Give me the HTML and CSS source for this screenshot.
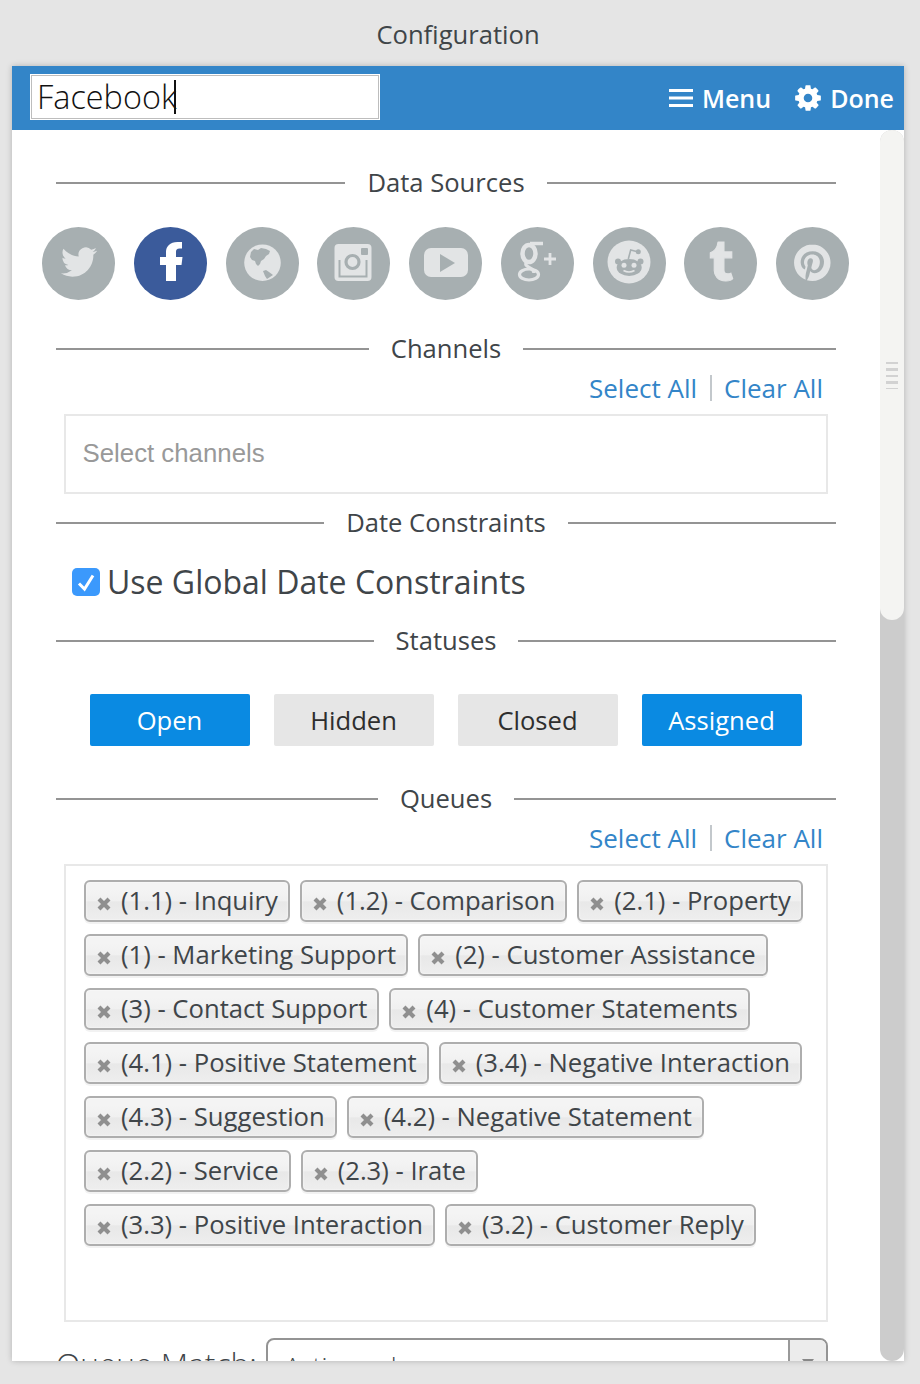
FILE: index.html
```html
<!DOCTYPE html>
<html lang="en">
<head>
<meta charset="utf-8">
<title>Configuration</title>
<link rel="stylesheet" href="styles.css">
</head>
<body>
<div class="title">Configuration</div>
<main class="window">
  <header class="topbar">
    <div class="name-input">Facebook<span class="caret"></span></div>
    <div class="actions">
      <span class="action">
        <svg class="menu-icon" viewBox="0 0 24 18"><path d="M0 1.500h24M0 9h24M0 16.500h24"/></svg>Menu
      </span>
      <span class="action">
        <svg class="gear-icon" viewBox="0 0 1792 1792"><path d="M1152 896q0-106-75-181t-181-75-181 75-75 181 75 181 181 75 181-75 75-181zm512-109v222q0 12-8 23t-20 13l-185 28q-19 54-39 91 35 50 107 138 10 12 10 25t-9 23q-27 37-99 108t-94 71q-12 0-26-9l-138-108q-44 23-91 38-16 136-29 186-7 28-36 28h-222q-14 0-24.500-8.500t-11.500-21.500l-28-184q-49-16-90-37l-141 107q-10 9-25 9-14 0-25-11-126-114-165-168-7-10-7-23 0-12 8-23 15-21 51-66.500t54-70.500q-27-50-41-99l-183-27q-13-2-21-12.500t-8-23.500v-222q0-12 8-23t19-13l186-28q14-46 39-92-40-57-107-138-10-12-10-24 0-10 9-23 26-36 98.500-107.500t94.500-71.500q13 0 26 10l138 107q44-23 91-38 16-136 29-186 7-28 36-28h222q14 0 24.500 8.500t11.500 21.500l28 184q49 16 90 37l142-107q9-9 24-9 13 0 25 10 129 119 165 170 7 8 7 22 0 12-8 23-15 21-51 66.500t-54 70.500q26 50 41 98l183 28q13 2 21 12.500t8 23.500z"/></svg>Done
      </span>
    </div>
  </header>
  <div class="body">
    <div class="content">
      <div class="divider first">Data Sources</div>
      <div class="sources">
        <svg class="source" viewBox="0 0 73 73"><circle class="disc" cx="36.500" cy="36.500" r="36.500"/><path class="glyph" transform="translate(19 17) scale(1.500)" d="M23.953 4.570a10 10 0 01-2.825.775 4.958 4.958 0 002.163-2.723c-.951.555-2.005.959-3.127 1.184a4.920 4.920 0 00-8.384 4.482C7.690 8.095 4.067 6.130 1.640 3.162a4.822 4.822 0 00-.666 2.475c0 1.710.870 3.213 2.188 4.096a4.904 4.904 0 01-2.228-.616v.060a4.923 4.923 0 003.946 4.827 4.996 4.996 0 01-2.212.085 4.936 4.936 0 004.604 3.417 9.867 9.867 0 01-6.102 2.105c-.390 0-.779-.023-1.170-.067a13.995 13.995 0 007.557 2.209c9.053 0 13.998-7.496 13.998-13.985 0-.210 0-.420-.015-.630A9.935 9.935 0 0024 4.590z"/></svg>
        <svg class="source" viewBox="0 0 73 73"><circle class="disc-fb" cx="36.500" cy="36.500" r="36.500"/><path class="glyph-white" d="M42 54V38h5.500l1-8H42v-5c0-2.300.7-3.500 3.700-3.500H48V15h-4.500C36 15 32 19.500 32 25v5h-6v8h6v16z"/></svg>
        <svg class="source" viewBox="0 0 73 73"><circle class="disc" cx="36.500" cy="36.500" r="36.500"/><circle class="glyph" cx="36.500" cy="35.700" r="18.300"/><path class="cut" d="M25 25l3-3 4 1 3-2 5 1 4 2-1 3-3 2-2 3-3 2-1 3-2 2-2-2-1-3-3-1-2-3z"/><path class="cut" d="M37 44l3-1 3 2 4 3-3 2-3 2-2-3z"/></svg>
        <svg class="source" viewBox="0 0 73 73"><circle class="disc" cx="36.500" cy="36.500" r="36.500"/><rect class="glyph" x="17.500" y="17" width="37" height="37" rx="4"/><path class="line-cut u" d="M22.500 33v16.500h27V33"/><circle class="ring" cx="35.500" cy="35" r="6.500"/><rect class="cut" x="44" y="21" width="7" height="7" rx="1"/></svg>
        <svg class="source" viewBox="0 0 73 73"><circle class="disc" cx="36.500" cy="36.500" r="36.500"/><rect class="glyph" x="15" y="21" width="44" height="29" rx="7"/><path class="cut" d="M31 27l15 9-15 9z"/></svg>
        <svg class="source" viewBox="0 0 73 73"><circle class="disc" cx="36.500" cy="36.500" r="36.500"/><g class="line"><ellipse cx="28" cy="26.500" rx="6.500" ry="8.500" stroke-width="4.500"/><ellipse cx="28" cy="47.500" rx="9.500" ry="5.500" stroke-width="3.200"/><path d="M29 16.500h13" stroke-width="3.500"/><path d="M26 35c-3 3 0 4 3 6 2 1 4 3 4 5" stroke-width="3.200"/><path d="M43 32h12M49 26v12" stroke-width="2.800"/></g></svg>
        <svg class="source" viewBox="0 0 73 73"><circle class="disc" cx="36.500" cy="36.500" r="36.500"/><circle class="glyph" cx="36" cy="35" r="21.500"/><circle class="cut" cx="25" cy="34.500" r="3"/><circle class="cut" cx="47.500" cy="34.500" r="3"/><ellipse class="cut" cx="36.200" cy="40.500" rx="12.500" ry="8.500"/><path class="line-cut" d="M35.300 32l2.400-9 6.800 1.700"/><circle class="cut" cx="45.300" cy="24.700" r="2.500"/><circle class="glyph" cx="31" cy="38.300" r="2.500"/><circle class="glyph" cx="41" cy="38.300" r="2.500"/><path class="line" d="M30.500 43.500q5.500 3 11 0" stroke-width="1.600"/></svg>
        <svg class="source" viewBox="0 0 73 73"><circle class="disc" cx="36.500" cy="36.500" r="36.500"/><path class="glyph thick" transform="translate(18 15) scale(1.625)" d="M14.563 24c-5.093 0-7.031-3.756-7.031-6.411V9.747H5.116V6.648c3.630-1.313 4.512-4.596 4.710-6.469C9.840.051 9.941 0 9.999 0h3.517v6.114h4.801v3.633h-4.820v7.470c.016 1.001.375 2.371 2.207 2.371h.090c.631-.020 1.486-.205 1.936-.419l1.156 3.425c-.436.636-2.400 1.374-4.156 1.404h-.178z"/></svg>
        <svg class="source" viewBox="0 0 73 73"><circle class="disc" cx="36.500" cy="36.500" r="36.500"/><path class="glyph" transform="translate(18 17.400) scale(1.525)" d="M12.017 0C5.396 0 .029 5.367.029 11.987c0 5.079 3.158 9.417 7.618 11.162-.105-.949-.199-2.403.041-3.439.219-.937 1.406-5.957 1.406-5.957s-.359-.720-.359-1.781c0-1.663.967-2.911 2.168-2.911 1.024 0 1.518.769 1.518 1.688 0 1.029-.653 2.567-.992 3.992-.285 1.193.600 2.165 1.775 2.165 2.128 0 3.768-2.245 3.768-5.487 0-2.861-2.063-4.869-5.008-4.869-3.410 0-5.409 2.562-5.409 5.199 0 1.033.394 2.143.889 2.741.099.120.112.225.085.345-.090.375-.293 1.199-.334 1.363-.053.225-.172.271-.401.165-1.495-.690-2.433-2.878-2.433-4.646 0-3.776 2.748-7.252 7.920-7.252 4.158 0 7.392 2.967 7.392 6.923 0 4.135-2.607 7.462-6.233 7.462-1.214 0-2.354-.629-2.758-1.379l-.749 2.848c-.269 1.045-1.004 2.352-1.498 3.146 1.123.345 2.306.535 3.550.535 6.607 0 11.985-5.365 11.985-11.987C23.970 5.390 18.592.026 11.985.026z"/></svg>
      </div>
      <div class="divider after-sources">Channels</div>
      <div class="bulk"><a>Select All</a><i class="sep"></i><a>Clear All</a></div>
      <div class="picker channels">Select channels</div>
      <div class="divider after-channels">Date Constraints</div>
      <label class="check-row"><span class="check"><svg viewBox="0 0 28 28"><path d="M7 15.500l5.500 5.500L21 7.500"/></svg></span>Use Global Date Constraints</label>
      <div class="divider after-check">Statuses</div>
      <div class="statuses">
        <button class="status on">Open</button>
        <button class="status">Hidden</button>
        <button class="status">Closed</button>
        <button class="status on">Assigned</button>
      </div>
      <div class="divider after-status">Queues</div>
      <div class="bulk"><a>Select All</a><i class="sep"></i><a>Clear All</a></div>
      <div class="picker queues">
        <span class="tag"><svg viewBox="0 0 14 14"><path d="M2 2l10 10M12 2L2 12"/></svg>(1.1) - Inquiry</span>
        <span class="tag"><svg viewBox="0 0 14 14"><path d="M2 2l10 10M12 2L2 12"/></svg>(1.2) - Comparison</span>
        <span class="tag"><svg viewBox="0 0 14 14"><path d="M2 2l10 10M12 2L2 12"/></svg>(2.1) - Property</span>
        <span class="tag"><svg viewBox="0 0 14 14"><path d="M2 2l10 10M12 2L2 12"/></svg>(1) - Marketing Support</span>
        <span class="tag"><svg viewBox="0 0 14 14"><path d="M2 2l10 10M12 2L2 12"/></svg>(2) - Customer Assistance</span>
        <span class="tag"><svg viewBox="0 0 14 14"><path d="M2 2l10 10M12 2L2 12"/></svg>(3) - Contact Support</span>
        <span class="tag"><svg viewBox="0 0 14 14"><path d="M2 2l10 10M12 2L2 12"/></svg>(4) - Customer Statements</span>
        <span class="tag"><svg viewBox="0 0 14 14"><path d="M2 2l10 10M12 2L2 12"/></svg>(4.1) - Positive Statement</span>
        <span class="tag"><svg viewBox="0 0 14 14"><path d="M2 2l10 10M12 2L2 12"/></svg>(3.4) - Negative Interaction</span>
        <span class="tag"><svg viewBox="0 0 14 14"><path d="M2 2l10 10M12 2L2 12"/></svg>(4.3) - Suggestion</span>
        <span class="tag"><svg viewBox="0 0 14 14"><path d="M2 2l10 10M12 2L2 12"/></svg>(4.2) - Negative Statement</span>
        <span class="tag"><svg viewBox="0 0 14 14"><path d="M2 2l10 10M12 2L2 12"/></svg>(2.2) - Service</span>
        <span class="tag"><svg viewBox="0 0 14 14"><path d="M2 2l10 10M12 2L2 12"/></svg>(2.3) - Irate</span>
        <span class="tag"><svg viewBox="0 0 14 14"><path d="M2 2l10 10M12 2L2 12"/></svg>(3.3) - Positive Interaction</span>
        <span class="tag"><svg viewBox="0 0 14 14"><path d="M2 2l10 10M12 2L2 12"/></svg>(3.2) - Customer Reply</span>
      </div>
      <div class="match-row">
        <span class="match-label">Queue Match:</span>
        <div class="select"><span class="select-value">Active only</span><span class="select-arrow"><svg viewBox="0 0 12 8"><path d="M0 0h12L6 8z"/></svg></span></div>
      </div>
    </div>
    <div class="scrollbar"><div class="thumb"><div class="grip"></div></div></div>
  </div>
</main>
</body>
</html>
```
FILE: styles.css
```css
* { box-sizing: border-box; }
html, body { margin: 0; height: 100%; }
body {
  background: #e5e5e5;
  font-family: "Open Sans", sans-serif;
  color: #3f4549;
  overflow: hidden;
}
.title {
  height: 66px;
  padding-top: 17px;
  font-size: 25.600px;
  line-height: 36px;
  text-align: center;
  margin-left: -4px;
}
.window {
  margin: 0 16px 0 12px;
  height: 1295px;
  display: flex;
  flex-direction: column;
  background: #fff;
  box-shadow: 0 0 6px rgba(0, 0, 0, .22);
}
.topbar {
  flex: 0 0 64px;
  display: flex;
  justify-content: space-between;
  padding: 8px 10px 10px 18px;
  background: #3385c8;
}
.name-input {
  width: 350px;
  height: 46px;
  border: 1px solid #fff;
  box-shadow: inset 0 0 0 1px #bdbdbd;
  background: #fff;
  padding: 0 0 3px 6px;
  font-weight: 300;
  font-size: 32.400px;
  line-height: 42px;
  color: #111;
  display: flex;
  align-items: center;
}
.caret {
  width: 2px;
  height: 34px;
  margin-left: -3px;
  margin-top: 3px;
  background: #111;
}
.actions {
  display: flex;
  align-items: center;
  gap: 22px;
  color: #fff;
  font-size: 25px;
  font-weight: 600;
}
.action { display: flex; align-items: center; line-height: 38px; margin-top: 1px; }
.menu-icon { width: 24px; height: 18px; margin-right: 9px; fill: none; stroke: #fff; stroke-width: 3; }
.gear-icon { width: 30px; height: 30px; margin-right: 7px; fill: #fff; }
.body { flex: 1; min-height: 0; display: flex; }
.content {
  flex: 1;
  min-width: 0;
  padding: 0 44px;
  overflow: hidden;
}
.divider {
  display: flex;
  align-items: center;
  gap: 22px;
  font-size: 25.600px;
  line-height: 36px;
  white-space: nowrap;
}
.divider::before, .divider::after {
  content: "";
  flex: 1;
  height: 2px;
  background: #949494;
}
.first { margin-top: 35px; }
.after-sources { margin-top: 31px; }
.after-channels { margin-top: 11px; }
.after-check { margin-top: 19px; }
.after-status { margin-top: 35px; }
.sources {
  margin: 26px -13px 0 -14px;
  display: flex;
  justify-content: space-between;
}
.source { width: 73px; height: 73px; display: block; }
.disc { fill: #a7afb1; }
.disc-fb { fill: #3b5b9b; }
.glyph { fill: #e2e4e5; }
.glyph-white { fill: #fff; }
.cut { fill: #a7afb1; }
.thick { stroke: #e2e4e5; stroke-width: .7; }
.line { fill: none; stroke: #e2e4e5; }
.line-cut { fill: none; stroke: #a7afb1; stroke-width: 1.600; }
.u { stroke-width: 2; }
.ring { fill: #e2e4e5; stroke: #a7afb1; stroke-width: 3.200; }
.bulk {
  margin: 3px 13px 0 0;
  display: flex;
  justify-content: flex-end;
  align-items: center;
  gap: 12.500px;
  height: 36px;
  font-size: 26px;
  color: #3385c8;
}
.sep { width: 2px; height: 26px; background: #c3c8cc; }
.picker {
  margin: 8px 8px 0;
  border: 2px solid #e8e8e8;
  background: #fff;
}
.channels {
  height: 80px;
  padding-left: 16.500px;
  font-family: "Liberation Sans", Arial, sans-serif;
  font-size: 25.800px;
  line-height: 74px;
  color: #999;
}
.check-row {
  margin: 19px 0 0 16px;
  height: 44px;
  padding-bottom: 2px;
  display: flex;
  align-items: center;
  gap: 7px;
  font-size: 32px;
}
.check {
  width: 28px;
  height: 28px;
  margin-top: 2px;
  border-radius: 5px;
  background: #3b99fc;
}
.check svg { display: block; fill: none; stroke: #fff; stroke-width: 3; }
.statuses {
  margin: 35px 34px 0;
  display: flex;
  gap: 24px;
}
.status {
  flex: 1;
  height: 52px;
  border: 0;
  border-radius: 2px;
  background: #e6e6e6;
  color: #2e2e2e;
  font: 25.600px "Open Sans", sans-serif;
  padding: 0 1px 0 0;
}
.status.on { background: #0a8ae2; color: #fff; }
.queues {
  height: 458px;
  padding: 14px 18px;
  display: flex;
  flex-wrap: wrap;
  align-content: flex-start;
  gap: 12px 10px;
}
.tag {
  height: 42px;
  display: flex;
  align-items: center;
  gap: 10px;
  padding: 0 10px 1px 11px;
  border: 2px solid #aeaeae;
  border-radius: 6px;
  background: linear-gradient(#f4f4f4 20%, #f0f0f0 50%, #e8e8e8 52%, #eee 100%);
  box-shadow: 0 0 2px #fff inset, 0 2px 0 rgba(0, 0, 0, .05);
  font-size: 25.650px;
  line-height: 36px;
  white-space: nowrap;
}
.tag svg {
  width: 14px;
  height: 14px;
  margin-top: 6px;
  fill: none;
  stroke: #8f8f8f;
  stroke-width: 4.200;
}
.match-row {
  margin-top: 16px;
  display: flex;
  gap: 9px;
  margin-right: 8px;
}
.match-label {
  margin-top: 6px;
  font-size: 31.700px;
  font-weight: 300;
  line-height: 40px;
  white-space: nowrap;
}
.select {
  flex: 1;
  height: 60px;
  display: flex;
  justify-content: space-between;
  border: 2px solid #949494;
  border-radius: 8px;
  overflow: hidden;
}
.select-value {
  padding-left: 17px;
  font-size: 26px;
  font-weight: 300;
  line-height: 52px;
}
.select-arrow {
  width: 38px;
  background: #ececec;
  border-left: 2px solid #999;
  display: flex;
  justify-content: center;
  padding-top: 19px;
}
.select-arrow svg { width: 12px; height: 8px; fill: #888; }
.scrollbar {
  flex: 0 0 24px;
  background: #ccc;
  border-radius: 12px;
}
.thumb {
  height: 490px;
  padding: 232px 6px 0;
  background: #f4f4f2;
  border-radius: 12px;
}
.grip {
  height: 27px;
  background: repeating-linear-gradient(#d2d2d2 0 2.500px, transparent 2.500px 6.400px);
}
```
